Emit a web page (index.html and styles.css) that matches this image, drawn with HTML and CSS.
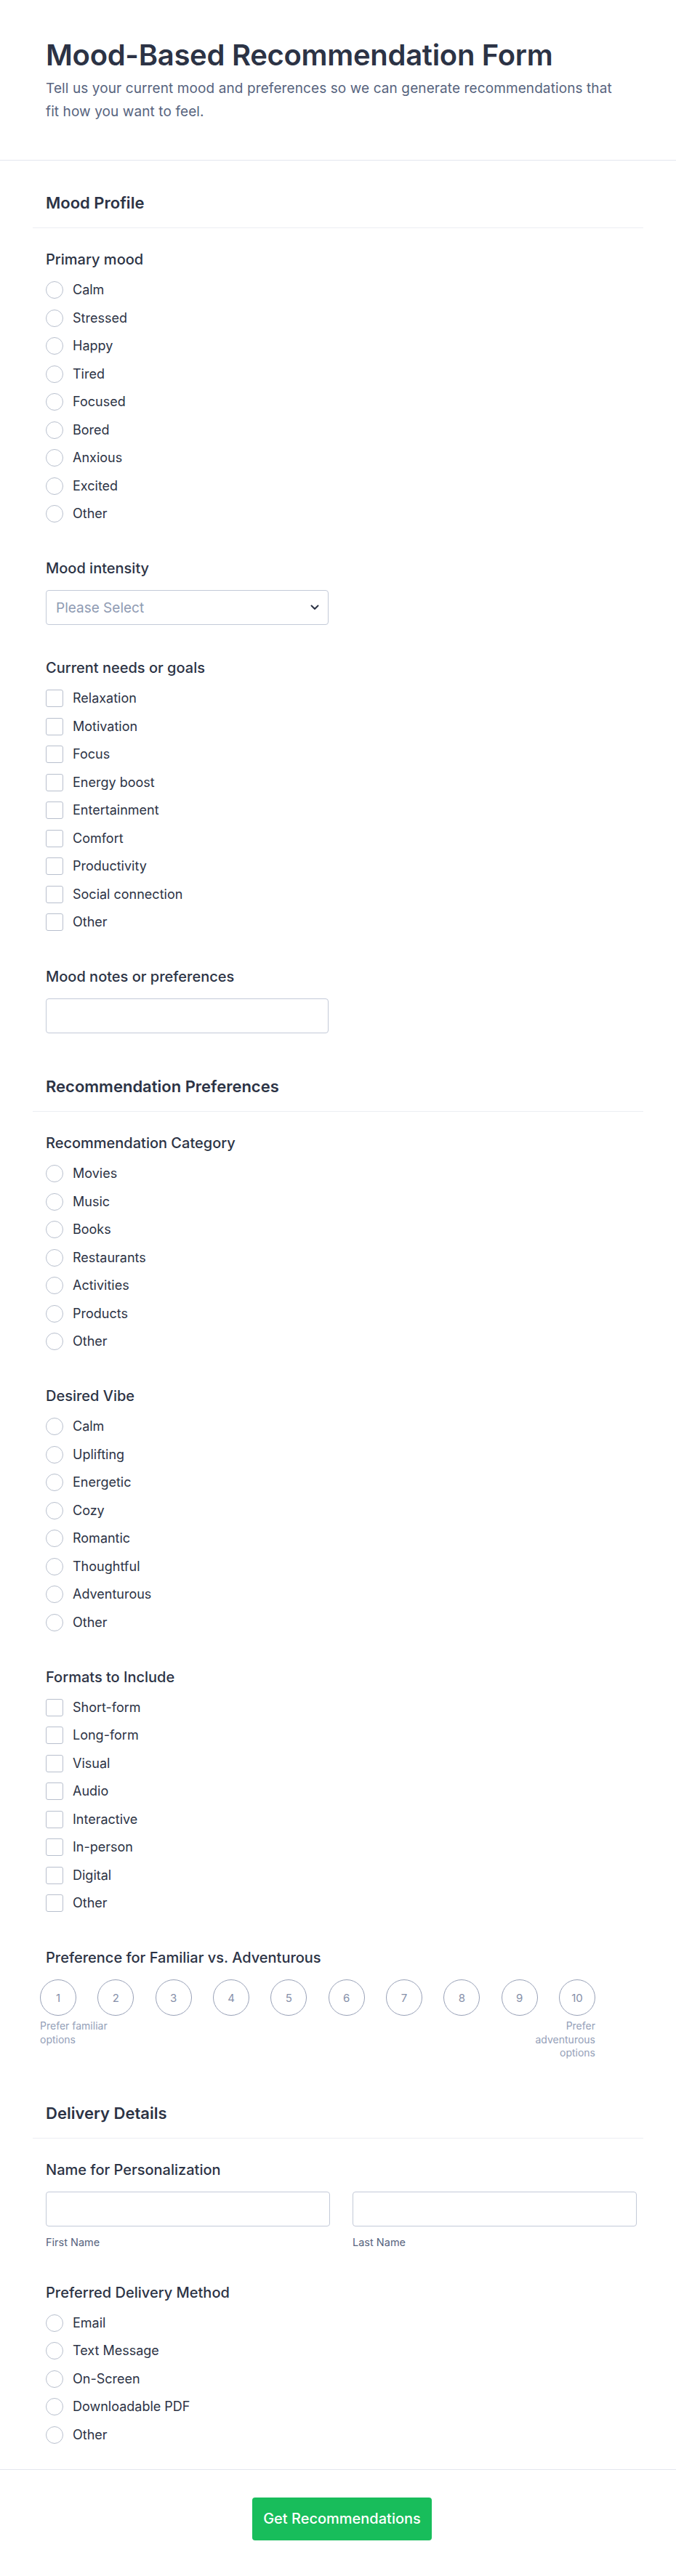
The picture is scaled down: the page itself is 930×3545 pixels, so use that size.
FILE: index.html
```html
<!DOCTYPE html>
<html lang="en">
<head>
  <meta charset="UTF-8" />
  <meta name="viewport" content="width=device-width, initial-scale=1" />
  <title>Mood-Based Recommendation Form</title>
  <link rel="stylesheet" href="styles.css">
</head>
<body>
  <form class="form">
    <header class="form-header">
      <h1>Mood-Based Recommendation Form</h1>
      <p>Tell us your current mood and preferences so we can generate recommendations that fit how you want to feel.</p>
    </header>

    <div class="form-body">
      <!-- Mood profile -->
      <div class="section-head"><h2>Mood Profile</h2></div>
      <div class="section-fields">
        <div class="field">
          <div class="label">Primary mood</div>
          <div class="options">
            <label class="opt"><input type="radio" name="mood"> Calm</label>
            <label class="opt"><input type="radio" name="mood"> Stressed</label>
            <label class="opt"><input type="radio" name="mood"> Happy</label>
            <label class="opt"><input type="radio" name="mood"> Tired</label>
            <label class="opt"><input type="radio" name="mood"> Focused</label>
            <label class="opt"><input type="radio" name="mood"> Bored</label>
            <label class="opt"><input type="radio" name="mood"> Anxious</label>
            <label class="opt"><input type="radio" name="mood"> Excited</label>
            <label class="opt"><input type="radio" name="mood"> Other</label>
          </div>
        </div>

        <div class="field">
          <div class="label">Mood intensity</div>
          <div class="select-wrap">
            <select class="select">
              <option>Please Select</option>
              <option>Low</option>
              <option>Moderate</option>
              <option>High</option>
            </select>
            <svg class="chevron" viewBox="0 0 12 8" width="12" height="8"><path d="M1.5 1.5 6 6l4.5-4.5" fill="none" stroke="#2c3345" stroke-width="2" stroke-linecap="round" stroke-linejoin="round"/></svg>
          </div>
        </div>

        <div class="field">
          <div class="label">Current needs or goals</div>
          <div class="options">
            <label class="opt"><input type="checkbox"> Relaxation</label>
            <label class="opt"><input type="checkbox"> Motivation</label>
            <label class="opt"><input type="checkbox"> Focus</label>
            <label class="opt"><input type="checkbox"> Energy boost</label>
            <label class="opt"><input type="checkbox"> Entertainment</label>
            <label class="opt"><input type="checkbox"> Comfort</label>
            <label class="opt"><input type="checkbox"> Productivity</label>
            <label class="opt"><input type="checkbox"> Social connection</label>
            <label class="opt"><input type="checkbox"> Other</label>
          </div>
        </div>

        <div class="field">
          <div class="label">Mood notes or preferences</div>
          <input class="text" type="text">
        </div>
      </div>

      <!-- Recommendation preferences -->
      <div class="section-head"><h2>Recommendation Preferences</h2></div>
      <div class="section-fields">
        <div class="field">
          <div class="label">Recommendation Category</div>
          <div class="options">
            <label class="opt"><input type="radio" name="cat"> Movies</label>
            <label class="opt"><input type="radio" name="cat"> Music</label>
            <label class="opt"><input type="radio" name="cat"> Books</label>
            <label class="opt"><input type="radio" name="cat"> Restaurants</label>
            <label class="opt"><input type="radio" name="cat"> Activities</label>
            <label class="opt"><input type="radio" name="cat"> Products</label>
            <label class="opt"><input type="radio" name="cat"> Other</label>
          </div>
        </div>

        <div class="field">
          <div class="label">Desired Vibe</div>
          <div class="options">
            <label class="opt"><input type="radio" name="vibe"> Calm</label>
            <label class="opt"><input type="radio" name="vibe"> Uplifting</label>
            <label class="opt"><input type="radio" name="vibe"> Energetic</label>
            <label class="opt"><input type="radio" name="vibe"> Cozy</label>
            <label class="opt"><input type="radio" name="vibe"> Romantic</label>
            <label class="opt"><input type="radio" name="vibe"> Thoughtful</label>
            <label class="opt"><input type="radio" name="vibe"> Adventurous</label>
            <label class="opt"><input type="radio" name="vibe"> Other</label>
          </div>
        </div>

        <div class="field">
          <div class="label">Formats to Include</div>
          <div class="options">
            <label class="opt"><input type="checkbox"> Short-form</label>
            <label class="opt"><input type="checkbox"> Long-form</label>
            <label class="opt"><input type="checkbox"> Visual</label>
            <label class="opt"><input type="checkbox"> Audio</label>
            <label class="opt"><input type="checkbox"> Interactive</label>
            <label class="opt"><input type="checkbox"> In-person</label>
            <label class="opt"><input type="checkbox"> Digital</label>
            <label class="opt"><input type="checkbox"> Other</label>
          </div>
        </div>

        <div class="field">
          <div class="label">Preference for Familiar vs. Adventurous</div>
          <div class="scale">
            <div class="scale-row">
              <label class="dot"><input type="radio" name="scale"><span>1</span></label>
              <label class="dot"><input type="radio" name="scale"><span>2</span></label>
              <label class="dot"><input type="radio" name="scale"><span>3</span></label>
              <label class="dot"><input type="radio" name="scale"><span>4</span></label>
              <label class="dot"><input type="radio" name="scale"><span>5</span></label>
              <label class="dot"><input type="radio" name="scale"><span>6</span></label>
              <label class="dot"><input type="radio" name="scale"><span>7</span></label>
              <label class="dot"><input type="radio" name="scale"><span>8</span></label>
              <label class="dot"><input type="radio" name="scale"><span>9</span></label>
              <label class="dot"><input type="radio" name="scale"><span>10</span></label>
            </div>
            <div class="scale-ends">
              <span>Prefer familiar options</span>
              <span class="end-right">Prefer adventurous options</span>
            </div>
          </div>
        </div>
      </div>

      <!-- Delivery -->
      <div class="section-head"><h2>Delivery Details</h2></div>
      <div class="section-fields">
        <div class="field">
          <div class="label">Name for Personalization</div>
          <div class="name-row">
            <div>
              <input class="text" type="text">
              <div class="sublabel">First Name</div>
            </div>
            <div>
              <input class="text" type="text">
              <div class="sublabel">Last Name</div>
            </div>
          </div>
        </div>

        <div class="field">
          <div class="label">Preferred Delivery Method</div>
          <div class="options">
            <label class="opt"><input type="radio" name="method"> Email</label>
            <label class="opt"><input type="radio" name="method"> Text Message</label>
            <label class="opt"><input type="radio" name="method"> On-Screen</label>
            <label class="opt"><input type="radio" name="method"> Downloadable PDF</label>
            <label class="opt"><input type="radio" name="method"> Other</label>
          </div>
        </div>
      </div>
    </div>

    <footer class="form-footer">
      <button type="submit" class="submit">Get Recommendations</button>
    </footer>
  </form>
</body>
</html>
```

FILE: styles.css
```css
* {
  box-sizing: border-box;
}
body {
  margin: 0;
  background: #fff;
  color: #2c3345;
  font-family: Inter, "Noto Sans", sans-serif;
}
h1, h2, p {
  margin: 0;
}

/* header */
.form-header {
  padding: 52px 63px 50px;
  border-bottom: 1px solid #e3e6ee;
}
.form-header h1 {
  font-size: 40px;
  line-height: 48px;
  font-weight: 600;
  letter-spacing: -0.3px;
}
.form-header p {
  margin-top: 6px;
  max-width: 790px;
  font-size: 19px;
  line-height: 32px;
  letter-spacing: 0.1px;
  color: #57647e;
}

/* body */
.form-body {
  padding: 32px 45px 31px;
}
.section-head {
  padding: 12px 18px 20px;
  border-bottom: 1px solid #eceef3;
}
.section-head h2 {
  font-size: 22px;
  line-height: 28px;
  font-weight: 600;
}
.section-fields {
  padding-top: 31px;
}
.field {
  padding: 0 18px;
  margin-bottom: 47px;
}
.form-body > .section-fields:last-child .field:last-child {
  margin-bottom: 0;
}
.label {
  font-size: 20px;
  line-height: 24px;
  font-weight: 500;
  margin-bottom: 18px;
}

/* radio and checkbox lists */
.options {
  display: flex;
  flex-direction: column;
  gap: 14.5px;
  padding-bottom: 4px;
}
.opt {
  display: flex;
  align-items: center;
  gap: 13px;
  height: 24px;
  font-size: 18px;
  line-height: 24px;
}
.opt input {
  appearance: none;
  margin: 0;
  width: 24px;
  height: 24px;
  flex: none;
  border: 1px solid #b8bfcd;
  background: #fff;
}
.opt input[type="radio"] {
  border-radius: 50%;
}
.opt input[type="checkbox"] {
  border-radius: 3px;
}

/* text inputs and dropdown */
.text,
.select {
  display: block;
  width: 389px;
  height: 48px;
  border: 1px solid #c3cad8;
  border-radius: 4px;
  background: #fff;
  font: inherit;
  font-size: 19px;
}
.select-wrap {
  position: relative;
  width: 389px;
}
.select {
  appearance: none;
  padding: 0 40px 0 13px;
  color: #8f9bb3;
}
.chevron {
  position: absolute;
  right: 13px;
  top: 20px;
  pointer-events: none;
}

/* 1-10 scale */
.scale {
  margin-left: -8px;
  width: 764px;
}
.scale-row {
  display: flex;
  justify-content: space-between;
}
.dot input {
  display: none;
}
.dot span {
  display: flex;
  align-items: center;
  justify-content: center;
  width: 50px;
  height: 50px;
  border: 1.5px solid #98a1b7;
  border-radius: 50%;
  font-size: 15px;
  color: #8690a9;
}
.scale-ends {
  display: flex;
  justify-content: space-between;
  margin-top: 5px;
  font-size: 14px;
  line-height: 18.5px;
  color: #94a0b8;
}
.scale-ends span {
  width: 100px;
}
.end-right {
  text-align: right;
}

/* full name */
.name-row {
  display: grid;
  grid-template-columns: 391px 391px;
  gap: 31px;
}
.name-row .text {
  width: 100%;
}
.sublabel {
  margin-top: 12px;
  font-size: 14.5px;
  line-height: 20px;
  color: #57647e;
}

/* submit */
.form-footer {
  border-top: 1px solid #e3e6ee;
  padding: 38px 0 49px 11px;
  display: flex;
  justify-content: center;
}
.submit {
  width: 247px;
  height: 59px;
  border: 0;
  border-radius: 4px;
  background: #18bd5b;
  color: #fff;
  font: inherit;
  font-size: 20px;
  font-weight: 500;
}
```
